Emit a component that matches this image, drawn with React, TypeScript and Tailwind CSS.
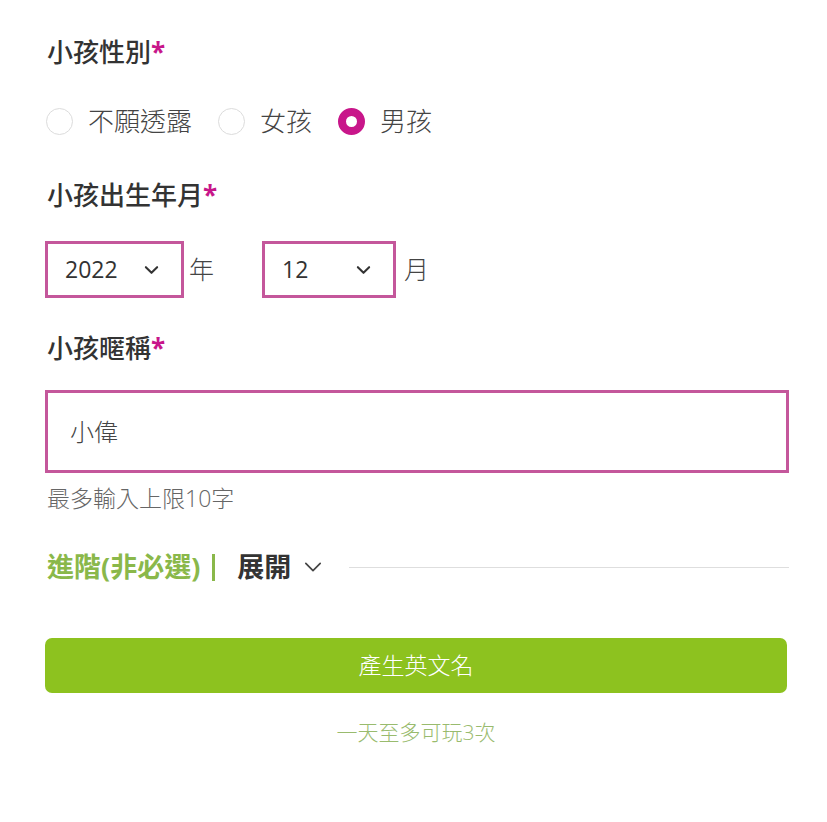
import React, { useState } from "react";

const font = { fontFamily: '"Open Sans", "Noto Sans CJK TC", sans-serif' };

function Label({ text, className = "" }: { text: string; className?: string }) {
  return (
    <div className={`text-[26px] leading-[36px] font-medium text-[#333] ${className}`}>
      {text}
      <span className="font-bold text-[#c8168a]">*</span>
    </div>
  );
}

function Chevron({ className = "", width = 2.2 }: { className?: string; width?: number }) {
  return (
    <svg viewBox="0 0 16 10" className={className} fill="none" stroke="currentColor" strokeWidth={width} strokeLinecap="round" strokeLinejoin="round">
      <path d="M2 2l6 6 6-6" />
    </svg>
  );
}

function Radio({ label, checked, onClick }: { label: string; checked: boolean; onClick: () => void }) {
  return (
    <button type="button" onClick={onClick} className="flex items-center gap-[15px]">
      <span
        className={
          checked
            ? "w-[27px] h-[27px] rounded-full border-[8px] border-[#c8168a] bg-white"
            : "w-[27px] h-[27px] rounded-full border border-[#dcdcdc] bg-white"
        }
      />
      <span className="text-[26px] leading-[36px] font-light text-[#444]">{label}</span>
    </button>
  );
}

function SelectBox({ value, width }: { value: string; width: string }) {
  return (
    <div className={`${width} h-[57px] border-[3px] border-[#c4579b] flex items-center justify-between pl-[17px] pr-[22px] bg-white`}>
      <span className="text-[23px] text-[#333]">{value}</span>
      <Chevron className="w-[15px] h-[10px] text-[#333]" />
    </div>
  );
}

export default function App() {
  const [gender, setGender] = useState(2);
  const options = ["不願透露", "女孩", "男孩"];
  return (
    <div className="w-[827px] min-h-[822px] bg-white" style={font}>
      <div className="ml-[45px] w-[744px] pt-[34px] flex flex-col">
        <Label text="小孩性別" className="pl-[2px]" />

        <div className="mt-[33px] flex items-center gap-[26px] pl-[1px]">
          {options.map((o, i) => (
            <Radio key={o} label={o} checked={gender === i} onClick={() => setGender(i)} />
          ))}
        </div>

        <Label text="小孩出生年月" className="mt-[38px] pl-[2px]" />

        <div className="mt-[28px] flex items-center">
          <SelectBox value="2022" width="w-[139px]" />
          <span className="ml-[5px] text-[25px] font-light text-[#444]">年</span>
          <div className="ml-[48px]">
            <SelectBox value="12" width="w-[134px]" />
          </div>
          <span className="ml-[8px] text-[25px] font-light text-[#444]">月</span>
        </div>

        <Label text="小孩暱稱" className="mt-[32px] pl-[2px]" />

        <div className="mt-[24px] h-[83px] border-[3px] border-[#c4579b] flex items-center pl-[22px]">
          <span className="text-[24px] font-light text-[#444]">小偉</span>
        </div>

        <div className="mt-[11px] text-[23px] leading-[28px] text-[#666] font-light pl-[2px]">最多輸入上限10字</div>

        <div className="mt-[37px] flex items-center h-[36px] pl-[2px]">
          <span className="text-[27px] font-bold text-[#8ab84a]">進階(非必選)</span>
          <span className="ml-[12px] w-[3px] h-[27px] bg-[#8ab84a]" />
          <span className="ml-[22px] text-[27px] font-bold text-[#333]">展開</span>
          <Chevron className="ml-[11px] w-[22px] h-[12px] text-[#444]" width={1.4} />
          <div className="ml-[25px] flex-1 h-px bg-[#dedede]" />
        </div>

        <button type="button" className="mt-[53px] h-[55px] w-[742px] rounded-[7px] bg-[#8dc21f] text-white text-[23px] font-light">
          產生英文名
        </button>

        <div className="mt-[25px] w-[742px] text-center text-[21px] leading-[28px] font-light text-[#99bb6e]">一天至多可玩3次</div>
      </div>
    </div>
  );
}
